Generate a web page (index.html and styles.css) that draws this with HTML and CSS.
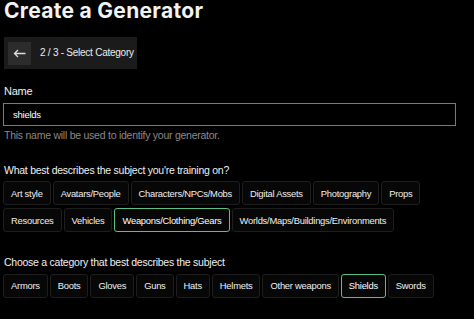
FILE: index.html
```html
<!DOCTYPE html>
<html>
<head>
<meta charset="utf-8">
<title>Create a Generator</title>
<link rel="stylesheet" href="styles.css">
</head>
<body>
<div class="page">
	<h1 class="title">Create a Generator</h1>

	<div class="step">
		<span class="step_back">
			<svg width="13" height="9" viewBox="0 0 13 9"><path d="M12.5 4.5H1.5M5 1L1.5 4.5L5 8" fill="none" stroke="#ddd" stroke-width="1.3"/></svg>
		</span>
		<span class="step_tx">2 / 3 - Select Category</span>
	</div>

	<div class="field">
		<label class="label">Name</label>
		<div class="input">shields</div>
		<p class="hint">This name will be used to identify your generator.</p>
	</div>

	<div class="group">
		<p class="question">What best describes the subject you're training on?</p>
		<ul class="chips">
			<li>Art style</li>
			<li>Avatars/People</li>
			<li>Characters/NPCs/Mobs</li>
			<li>Digital Assets</li>
			<li>Photography</li>
			<li>Props</li>
			<li>Resources</li>
			<li>Vehicles</li>
			<li class="current">Weapons/Clothing/Gears</li>
			<li>Worlds/Maps/Buildings/Environments</li>
		</ul>
	</div>

	<div class="group">
		<p class="question">Choose a category that best describes the subject</p>
		<ul class="chips">
			<li>Armors</li>
			<li>Boots</li>
			<li>Gloves</li>
			<li>Guns</li>
			<li>Hats</li>
			<li>Helmets</li>
			<li>Other weapons</li>
			<li class="current">Shields</li>
			<li>Swords</li>
		</ul>
	</div>
</div>
</body>
</html>
```

FILE: styles.css
```css
/* Reset style */
* {
	margin:0;
	padding:0;
	box-sizing:border-box;
}
html, body {
	background:#000;
}
body {
	color:#eee;
	font:10px/1.2 "Liberation Sans", Arial, sans-serif;
	letter-spacing:-0.25px;
}
ul, li {
	list-style:none;
}
/* Page */
.page {
	padding:0 18px 0 3px;
}
.title {
	font:700 21px/22px Inter, "Noto Sans", sans-serif;
	letter-spacing:0.3px;
	color:#f2f2f2;
	margin:0 0 15px 1px;
}
.step {
	display:inline-flex;
	align-items:center;
	gap:9px;
	height:32px;
	margin-left:1px;
	padding:0 3px 0 4px;
	background:#1b1b1b;
}
.step_back {
	display:flex;
	align-items:center;
	justify-content:center;
	width:23px;
	height:23px;
	background:#2c2c2c;
}
.step_tx {
	font-size:10px;
	color:#ededed;
}
/* Name field */
.field {
	margin-top:16px;
}
.label {
	display:block;
	font-size:11px;
	color:#f0f0f0;
	margin:0 0 5px 1px;
}
.input {
	height:23px;
	border:1px solid #7a7a7a;
	padding:0 9px;
	display:flex;
	align-items:center;
	font-size:9.5px;
	color:#fff;
}
.hint {
	font-size:10.5px;
	color:#8a8a8a;
	margin:3px 0 0 1px;
}
/* Chips */
.group {
	margin-top:22px;
}
.group + .group {
	margin-top:24px;
}
.question {
	font-size:10.5px;
	color:#f0f0f0;
	margin:0 0 5px 1px;
}
.chips {
	display:flex;
	flex-wrap:wrap;
	gap:3px 2px;
}
.chips li {
	height:24px;
	padding:0 7px;
	display:flex;
	align-items:center;
	border:1px solid #1e1e1e;
	border-radius:3px;
	background:#070707;
	color:#f0f0f0;
	font-size:9.4px;
}
.chips .current {
	border-color:#5cbf88;
	color:#fff;
}
```
